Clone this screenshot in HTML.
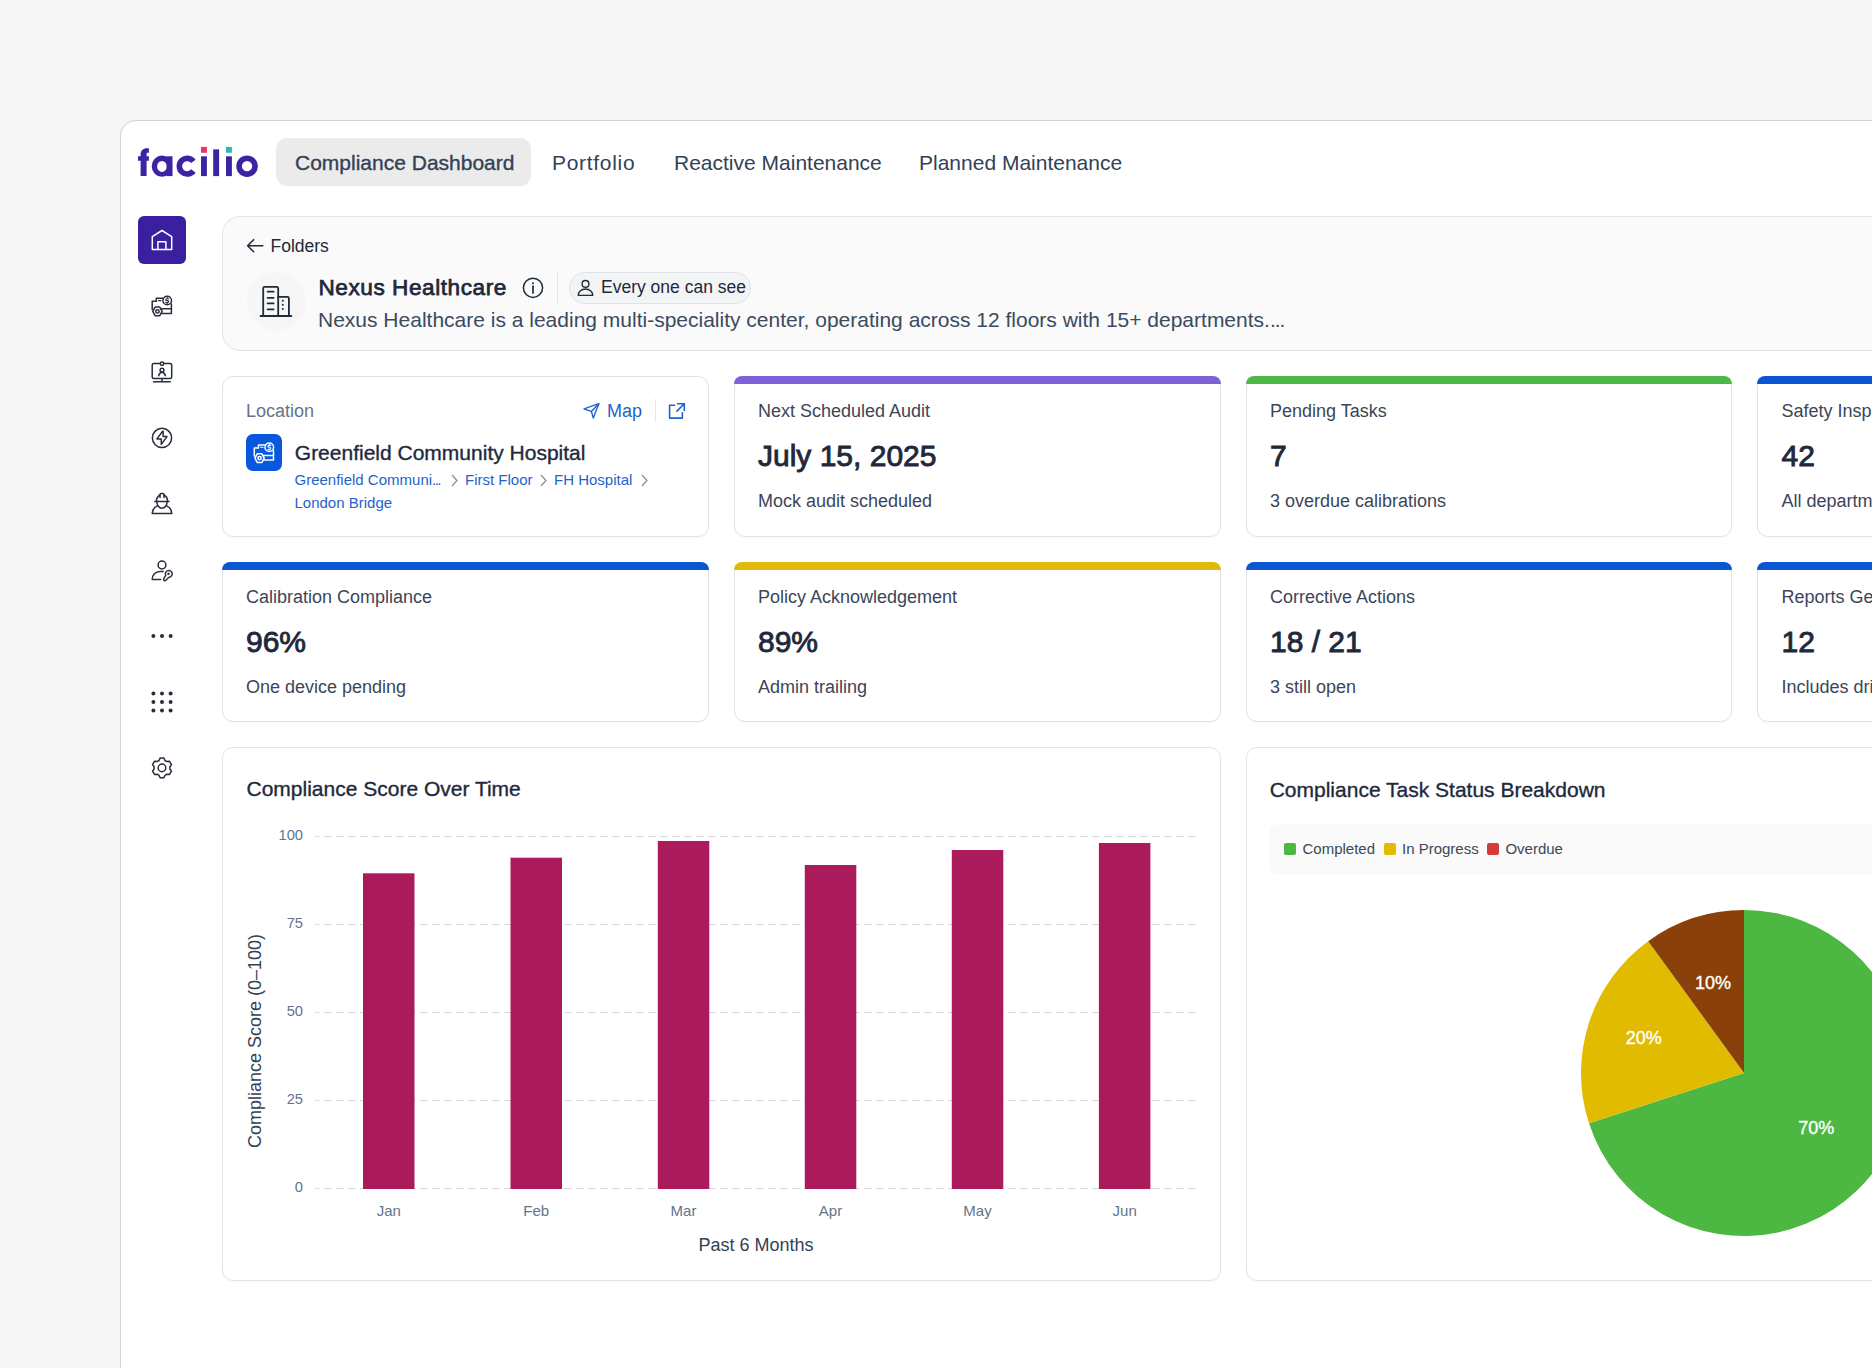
<!DOCTYPE html>
<html><head><meta charset="utf-8">
<style>
*{box-sizing:border-box;margin:0;padding:0}
html,body{width:1872px;height:1368px;overflow:hidden;background:#f6f6f6;font-family:"Liberation Sans",sans-serif;color:#1e293b}
.a{position:absolute;white-space:nowrap}
#frame{position:absolute;left:120px;top:120px;width:1800px;height:1300px;background:#fff;border:1px solid #d3d3d3;border-radius:16px;box-shadow:0 0 1px rgba(0,0,0,0.08)}
.tab{position:absolute;font-size:21px;color:#334155;line-height:1}
.med{-webkit-text-stroke:0.35px currentColor}
.card{position:absolute;background:#fff;border:1px solid #e2e3e5;border-radius:11px;box-shadow:0 1px 2px rgba(0,0,0,0.03)}
.bar{position:absolute;left:-1px;top:-1px;right:-1px;height:8px;border-radius:11px 11px 0 0}
.lbl{position:absolute;font-size:18px;color:#3b4657;line-height:1}
.val{position:absolute;font-size:30px;font-weight:normal;-webkit-text-stroke:0.9px currentColor;color:#1e293b;line-height:1}
.sub{position:absolute;font-size:18px;color:#3b4657;line-height:1}
.ic{position:absolute}
</style></head><body>
<div id="frame"></div>

<!-- logo -->
<svg class="a" id="logo" style="left:134px;top:140px" width="130" height="44" viewBox="0 0 130 44">
<g fill="#3b23a3"><path d="M6.6 36.1V20.8H4V16.3H6.6V14.6C6.6 10.5 9.3 8.3 13 8.3H14.9V12.8H13.9C13.1 12.8 12.6 13.3 12.6 14.2V16.3H14.9V20.8H12.6V36.1Z"/>
<rect x="32.7" y="16.3" width="5.8" height="19.8"/><rect x="67" y="16.3" width="5.9" height="19.8"/><rect x="79.2" y="9.4" width="5.9" height="26.7"/><rect x="92" y="16.3" width="5.9" height="19.8"/></g>
<path fill="#3b23a3" fill-rule="evenodd" d="M17.7 26.2a10.3 10.6 0 1 0 20.6 0a10.3 10.6 0 1 0-20.6 0ZM23.1 26.4a4.85 5.5 0 1 0 9.7 0a4.85 5.5 0 1 0-9.7 0Z"/><g fill="none" stroke="#3b23a3" stroke-width="5.6"><circle cx="113.05" cy="26.2" r="7.95"/><path d="M59.4 21.37A7.85 7.85 0 1 0 59.4 31.03"/></g>
<rect x="67" y="6.9" width="5.9" height="5.9" fill="#e8366f"/><rect x="92" y="6.9" width="5.9" height="5.9" fill="#2cb6c2"/>
</svg>

<!-- tabs -->
<div class="a" style="left:276px;top:138px;width:255px;height:48px;background:#ebebeb;border-radius:11px"></div>
<div class="tab a med" id="t1" style="left:295px;top:151.7px">Compliance Dashboard</div>
<div class="tab a" id="t2" style="left:552px;top:151.7px;letter-spacing:0.7px">Portfolio</div>
<div class="tab a" id="t3" style="left:674px;top:151.7px">Reactive Maintenance</div>
<div class="tab a" id="t4" style="left:919px;top:151.7px">Planned Maintenance</div>

<!-- sidebar -->
<div class="a" style="left:138px;top:216px;width:48px;height:48px;background:#3a1f9f;border-radius:6px"></div>

<svg class="a" style="left:0;top:0" width="400" height="800" viewBox="0 0 400 800" fill="none" stroke="#282d3a" stroke-width="1.5" stroke-linecap="round" stroke-linejoin="round">
<g transform="translate(146,224)" stroke="#fff" stroke-width="1.5"><path d="M6.3 12.6 16 6.5l9.7 6.1v13H6.3z"/><path d="M11.9 25.6v-7.8h8v7.8"/></g>
<g transform="translate(146,290)"><path d="M17 8.2H10.3V11.2H6.2V19.4"/><path d="M15.6 23.4H25.4V14"/><path d="M14.6 18.7H25.4"/><circle cx="21.2" cy="10.5" r="4.3"/><path d="M22.6 8.7h-1.9a.95.95 0 0 0 0 1.9h1a.95.95 0 0 1 0 1.9h-2M21.2 7.6v1.1M21.2 12.5v1" stroke-width="1.1"/><path d="M6.8 21.4 9.1 17.1h4.7l2.3 4.3-2.3 4.3H9.1z"/><circle cx="11.45" cy="21.4" r="1.7"/><path d="M12.4 10.6h2.6" stroke-width="1.1"/></g>
<g transform="translate(146,356)"><rect x="6.2" y="7.6" width="19.5" height="15" rx="1.6"/><circle cx="16" cy="7.8" r="1.7" fill="#fff"/><circle cx="16" cy="14.2" r="1.9"/><path d="M12.6 19.6c.8-2 2-3.3 3.4-3.3s2.6 1.3 3.4 3.3"/><path d="M16 22.6v3M7.6 25.7h16.6"/></g>
<g transform="translate(146,422)"><circle cx="16" cy="15.9" r="9.6"/><path d="M16.6 9.2 10.9 16.9h4.4v5.5l5.7-7.8h-3.9V9.2z"/></g>
<g transform="translate(146,488)"><path d="M10.4 13.4C10.4 10.4 11.8 8 14 7M18 7C20.2 8 21.6 10.4 21.6 13.4"/><path d="M14 9.6V6.6C14 5.9 14.5 5.4 15.2 5.4H16.8C17.5 5.4 18 5.9 18 6.6V9.6"/><path d="M8.8 13.4h14.2"/><path d="M10.8 13.6a5.2 6.6 0 0 0 10.4 0"/><path d="M11.3 17.9c-3 1.3-5 4.3-5.1 7.6h19.6c-.1-3.3-2.1-6.3-5.1-7.6"/></g>
<g transform="translate(146,554)"><circle cx="16" cy="11" r="3.9"/><path d="M17.2 17.4H14a7.8 7.8 0 0 0-7.8 8.1h8.4"/><path d="M19.8 21.4a3.4 3.4 0 1 1 3.2 1.8l-3.3 3.1a1.3 1.3 0 0 1-2-1.6z"/><circle cx="22.5" cy="19.8" r=".5" fill="#282d3a"/></g>
<g fill="#282d3a" stroke="none"><circle cx="153.4" cy="636" r="2"/><circle cx="162" cy="636" r="2"/><circle cx="170.6" cy="636" r="2"/>
<circle cx="153.4" cy="693.5" r="2"/><circle cx="162" cy="693.5" r="2"/><circle cx="170.6" cy="693.5" r="2"/>
<circle cx="153.4" cy="702" r="2"/><circle cx="162" cy="702" r="2"/><circle cx="170.6" cy="702" r="2"/>
<circle cx="153.4" cy="710.5" r="2"/><circle cx="162" cy="710.5" r="2"/><circle cx="170.6" cy="710.5" r="2"/></g>
<g transform="translate(146,752)"><path d="M13.00 8.48 L14.09 6.08 L17.91 6.08 L19.00 8.48 L20.93 9.60 L23.55 9.34 L25.46 12.64 L23.92 14.79 L23.92 17.01 L25.46 19.16 L23.55 22.46 L20.93 22.20 L19.00 23.32 L17.91 25.72 L14.09 25.72 L13.00 23.32 L11.07 22.20 L8.45 22.46 L6.54 19.16 L8.08 17.01 L8.08 14.79 L6.54 12.64 L8.45 9.34 L11.07 9.60Z"/><circle cx="16" cy="15.9" r="3.8"/></g>
</svg>

<!-- header card -->
<div class="a" style="left:222px;top:216px;width:1700px;height:135px;background:#fafafa;border:1px solid #e4e4e6;border-radius:18px"></div>
<div class="a" style="left:247px;top:272px;width:59px;height:59px;border-radius:50%;background:#f6f6f6"></div>

<div class="a" id="folders" style="left:270.5px;top:238px;font-size:17.5px;color:#1f2937;line-height:1">Folders</div>
<div class="a" id="nexus" style="left:318.5px;top:276.8px;font-size:22.6px;font-weight:normal;letter-spacing:0.55px;-webkit-text-stroke:0.75px currentColor;color:#1e293b;line-height:1">Nexus Healthcare</div>
<div class="a" id="desc" style="left:318px;top:309px;font-size:21px;color:#3b4a5e;line-height:1">Nexus Healthcare is a leading multi-speciality center, operating across 12 floors with 15+ departments.<span style="letter-spacing:-1px">...</span></div>
<div class="a" style="left:557px;top:272px;width:1px;height:33px;background:#e2e4e8"></div>
<div class="a" style="left:569px;top:272px;width:182px;height:32px;background:#f3f4f6;border:1px solid #dfe2e6;border-radius:16px"></div>
<div class="a" id="every" style="left:601px;top:279.1px;font-size:17.5px;color:#1f2937;line-height:1">Every one can see</div>
<svg class="a" style="left:0;top:0" width="800" height="400" viewBox="0 0 800 400" fill="none" stroke="#1f2a3a" stroke-width="1.6" stroke-linecap="round" stroke-linejoin="round">
<path d="M262.8 245.7H247.6M253.6 239.7l-6 6 6 6"/>
<path d="M263.2 316V288.3a1.5 1.5 0 0 1 1.5-1.5h12a1.5 1.5 0 0 1 1.5 1.5V316" stroke-width="1.8"/><path d="M278.2 296.9h9.2a1.5 1.5 0 0 1 1.5 1.5V316" stroke-width="1.8"/><path d="M260.6 316h30.7" stroke-width="1.9"/>
<path d="M267.6 291.7h6M267.6 297.8h6M267.6 303.4h6M267.6 309.3h6" stroke-width="1.8"/>
<g fill="#1f2a3a" stroke="none"><circle cx="282.8" cy="300.8" r="1"/><circle cx="282.8" cy="304.8" r="1"/><circle cx="282.8" cy="309" r="1"/></g>
<circle cx="533" cy="287.8" r="9.6" stroke-width="1.5"/><path d="M533 286.2v6.8" stroke-width="1.7"/><circle cx="533" cy="283.3" r="1" fill="#1f2a3a" stroke="none"/>
<circle cx="585.5" cy="283.9" r="3.4" stroke-width="1.4"/><path d="M578.3 295.4c0-3.8 3.2-6.4 7.2-6.4s7.2 2.6 7.2 6.4z" stroke-width="1.4"/>
</svg>

<!-- row 1 -->
<div class="card" style="left:222px;top:376px;width:487px;height:161px"></div>
<div class="card" style="left:734px;top:376px;width:487px;height:161px"><div class="bar" style="background:#7b62d6"></div></div>
<div class="card" style="left:1246px;top:376px;width:486px;height:161px"><div class="bar" style="background:#4cb848"></div></div>
<div class="card" style="left:1757px;top:376px;width:487px;height:161px"><div class="bar" style="background:#0a56d0"></div></div>
<!-- row 2 -->
<div class="card" style="left:222px;top:562px;width:487px;height:160px"><div class="bar" style="background:#0a56d0"></div></div>
<div class="card" style="left:734px;top:562px;width:487px;height:160px"><div class="bar" style="background:#e0b90c"></div></div>
<div class="card" style="left:1246px;top:562px;width:486px;height:160px"><div class="bar" style="background:#0a56d0"></div></div>
<div class="card" style="left:1757px;top:562px;width:487px;height:160px"><div class="bar" style="background:#0a56d0"></div></div>
<div class="lbl a" style="left:758px;top:402px">Next Scheduled Audit</div>
<div class="val a" style="left:758px;top:441.3px">July 15, 2025</div>
<div class="sub a" style="left:758px;top:491.8px">Mock audit scheduled</div>
<div class="lbl a" style="left:1270px;top:402px">Pending Tasks</div>
<div class="val a" style="left:1270px;top:441.3px">7</div>
<div class="sub a" style="left:1270px;top:491.8px">3 overdue calibrations</div>
<div class="lbl a" style="left:1781.5px;top:402px">Safety Inspections</div>
<div class="val a" style="left:1781.5px;top:441.3px">42</div>
<div class="sub a" style="left:1781.5px;top:491.8px">All departments</div>
<div class="lbl a" style="left:246px;top:588px">Calibration Compliance</div>
<div class="val a" style="left:246px;top:627.3px">96%</div>
<div class="sub a" style="left:246px;top:677.8px">One device pending</div>
<div class="lbl a" style="left:758px;top:588px">Policy Acknowledgement</div>
<div class="val a" style="left:758px;top:627.3px">89%</div>
<div class="sub a" style="left:758px;top:677.8px">Admin trailing</div>
<div class="lbl a" style="left:1270px;top:588px">Corrective Actions</div>
<div class="val a" style="left:1270px;top:627.3px">18 / 21</div>
<div class="sub a" style="left:1270px;top:677.8px">3 still open</div>
<div class="lbl a" style="left:1781.5px;top:588px">Reports Generated</div>
<div class="val a" style="left:1781.5px;top:627.3px">12</div>
<div class="sub a" style="left:1781.5px;top:677.8px">Includes drills</div>
<!-- location card -->
<div class="a" style="left:246px;top:402.3px;font-size:18px;line-height:1;color:#64748b">Location</div>
<svg class="a" style="left:0;top:0" width="720" height="540" viewBox="0 0 720 540" fill="none" stroke="#1f63cb" stroke-width="1.4" stroke-linecap="round" stroke-linejoin="round">
<path d="M598.8 403.7 584 408.8l7.4 2.6 1.9 6.7z"/><path d="M598.8 403.7 591.4 411.4"/>
<path d="M674.7 405.3h-5.1v12.8h12.8v-5.4" stroke-width="1.6"/><path d="M677.5 403.7h6.8v6.8M684.3 403.7l-7.4 7.4" stroke-width="1.6"/>
</svg>
<div class="a" style="left:607px;top:402px;font-size:18px;line-height:1;color:#1f63cb">Map</div>
<div class="a" style="left:655px;top:399px;width:1px;height:23px;background:#e5e7eb"></div>
<div class="a" style="left:246px;top:434.4px;width:36px;height:36.2px;background:#0a57df;border-radius:7px"></div>
<svg class="a" style="left:0;top:0" width="720" height="540" viewBox="0 0 720 540" fill="none" stroke="#fff" stroke-width="1.5" stroke-linecap="round" stroke-linejoin="round"><g transform="translate(248.1,436.7)"><path d="M17 8.2H10.3V11.2H6.2V19.4"/><path d="M15.6 23.4H25.4V14"/><path d="M14.6 18.7H25.4"/><circle cx="21.2" cy="10.5" r="4.3"/><path d="M22.6 8.7h-1.9a.95.95 0 0 0 0 1.9h1a.95.95 0 0 1 0 1.9h-2M21.2 7.6v1.1M21.2 12.5v1" stroke-width="1.1"/><path d="M6.8 21.4 9.1 17.1h4.7l2.3 4.3-2.3 4.3H9.1z"/><circle cx="11.45" cy="21.4" r="1.7"/><path d="M12.4 10.6h2.6" stroke-width="1.1"/></g></svg>
<div class="a med" style="left:294.8px;top:441.7px;font-size:21px;line-height:1;color:#1e293b">Greenfield Community Hospital</div>
<div class="a" style="left:294.5px;top:472.3px;font-size:15px;line-height:1;color:#1f63cb">Greenfield Communi<span style="letter-spacing:-1.6px">...</span></div>
<svg class="a" style="left:449px;top:472.8px" width="10" height="14" viewBox="0 0 10 14" fill="none" stroke="#868b94" stroke-width="1.2"><path d="M3 2l5 5.5-5 5.5"/></svg>
<div class="a" style="left:465px;top:472.3px;font-size:15px;line-height:1;color:#1f63cb">First Floor</div>
<svg class="a" style="left:538px;top:472.8px" width="10" height="14" viewBox="0 0 10 14" fill="none" stroke="#868b94" stroke-width="1.2"><path d="M3 2l5 5.5-5 5.5"/></svg>
<div class="a" style="left:554px;top:472.3px;font-size:15px;line-height:1;color:#1f63cb">FH Hospital</div>
<svg class="a" style="left:639px;top:472.8px" width="10" height="14" viewBox="0 0 10 14" fill="none" stroke="#868b94" stroke-width="1.2"><path d="M3 2l5 5.5-5 5.5"/></svg>
<div class="a" style="left:294.5px;top:495.2px;font-size:15px;line-height:1;color:#1f63cb">London Bridge</div>

<!-- chart cards -->
<div class="card" style="left:222px;top:747px;width:999px;height:534px"></div>
<div class="card" style="left:1245.5px;top:747px;width:999px;height:534px"></div>
<!--CHART-->
<svg class="a" style="left:0;top:0" width="1872" height="1368" viewBox="0 0 1872 1368">
<line x1="315" y1="836.5" x2="1197" y2="836.5" stroke="#d9d9d9" stroke-width="1" stroke-dasharray="7.5 4.5" stroke-dashoffset="3"/>
<line x1="315" y1="924.5" x2="1197" y2="924.5" stroke="#d9d9d9" stroke-width="1" stroke-dasharray="7.5 4.5" stroke-dashoffset="3"/>
<line x1="315" y1="1012.5" x2="1197" y2="1012.5" stroke="#d9d9d9" stroke-width="1" stroke-dasharray="7.5 4.5" stroke-dashoffset="3"/>
<line x1="315" y1="1100.5" x2="1197" y2="1100.5" stroke="#d9d9d9" stroke-width="1" stroke-dasharray="7.5 4.5" stroke-dashoffset="3"/>
<line x1="315" y1="1188.5" x2="1197" y2="1188.5" stroke="#d9d9d9" stroke-width="1" stroke-dasharray="7.5 4.5" stroke-dashoffset="3"/>
<rect x="363" y="873.3" width="51.5" height="315.70000000000005" fill="#ab1a5b"/>
<rect x="510.5" y="857.7" width="51.5" height="331.29999999999995" fill="#ab1a5b"/>
<rect x="657.8" y="841" width="51.5" height="348" fill="#ab1a5b"/>
<rect x="804.8" y="865" width="51.5" height="324" fill="#ab1a5b"/>
<rect x="951.8" y="850" width="51.5" height="339" fill="#ab1a5b"/>
<rect x="1098.9" y="843" width="51.5" height="346" fill="#ab1a5b"/>
<path d="M1744,1073 L1744.00,910.00 A163,163 0 1 1 1588.98,1123.37 Z" fill="#4cb842"/>
<path d="M1744,1073 L1588.98,1123.37 A163,163 0 0 1 1648.19,941.13 Z" fill="#e1bb00"/>
<path d="M1744,1073 L1648.19,941.13 A163,163 0 0 1 1744.00,910.00 Z" fill="#8a400b"/>
</svg>
<div class="a" style="left:253px;width:50px;text-align:right;top:828.1px;font-size:14.7px;line-height:1;color:#64748b">100</div>
<div class="a" style="left:253px;width:50px;text-align:right;top:916.1px;font-size:14.7px;line-height:1;color:#64748b">75</div>
<div class="a" style="left:253px;width:50px;text-align:right;top:1004.1px;font-size:14.7px;line-height:1;color:#64748b">50</div>
<div class="a" style="left:253px;width:50px;text-align:right;top:1092.1px;font-size:14.7px;line-height:1;color:#64748b">25</div>
<div class="a" style="left:253px;width:50px;text-align:right;top:1180.1px;font-size:14.7px;line-height:1;color:#64748b">0</div>
<div class="a" style="left:348.8px;width:80px;text-align:center;top:1203.4px;font-size:15px;line-height:1;color:#64748b">Jan</div>
<div class="a" style="left:496.2px;width:80px;text-align:center;top:1203.4px;font-size:15px;line-height:1;color:#64748b">Feb</div>
<div class="a" style="left:643.5px;width:80px;text-align:center;top:1203.4px;font-size:15px;line-height:1;color:#64748b">Mar</div>
<div class="a" style="left:790.5px;width:80px;text-align:center;top:1203.4px;font-size:15px;line-height:1;color:#64748b">Apr</div>
<div class="a" style="left:937.5px;width:80px;text-align:center;top:1203.4px;font-size:15px;line-height:1;color:#64748b">May</div>
<div class="a" style="left:1084.7px;width:80px;text-align:center;top:1203.4px;font-size:15px;line-height:1;color:#64748b">Jun</div>
<div class="a" style="left:656px;width:200px;text-align:center;top:1236px;font-size:18px;line-height:1;color:#334155">Past 6 Months</div>
<div class="a" id="ytitle" style="left:155px;width:200px;text-align:center;top:1039px;font-size:18px;line-height:1;color:#334155;transform:rotate(-90deg)">Compliance Score (0–100)</div>
<div class="a med" style="left:246.5px;top:778.3px;font-size:21px;line-height:1;color:#1e293b">Compliance Score Over Time</div>
<div class="a med" style="left:1269.7px;top:778.5px;font-size:21px;line-height:1;color:#1e293b">Compliance Task Status Breakdown</div>
<div class="a" style="left:1269px;top:824px;width:700px;height:51px;background:#fafafa;border-radius:10px"></div>
<div class="a" style="left:1284px;top:843px;width:12px;height:12px;background:#4cb842;border-radius:2px"></div>
<div class="a" style="left:1302.5px;top:841.3px;font-size:15px;line-height:1;color:#3d4757">Completed</div>
<div class="a" style="left:1384.2px;top:843px;width:12px;height:12px;background:#e1bb00;border-radius:2px"></div>
<div class="a" style="left:1402px;top:841.3px;font-size:15px;line-height:1;color:#3d4757">In Progress</div>
<div class="a" style="left:1487.1px;top:843px;width:12px;height:12px;background:#d33a3a;border-radius:2px"></div>
<div class="a" style="left:1505.4px;top:841.3px;font-size:15px;line-height:1;color:#3d4757">Overdue</div>
<div class="a med" style="left:1672.9px;width:80px;text-align:center;top:973.6px;font-size:18px;line-height:1;color:#fff">10%</div>
<div class="a med" style="left:1603.8px;width:80px;text-align:center;top:1029.4px;font-size:18px;line-height:1;color:#fff">20%</div>
<div class="a med" style="left:1776.3px;width:80px;text-align:center;top:1119.4px;font-size:18px;line-height:1;color:#fff">70%</div>
</body></html>
